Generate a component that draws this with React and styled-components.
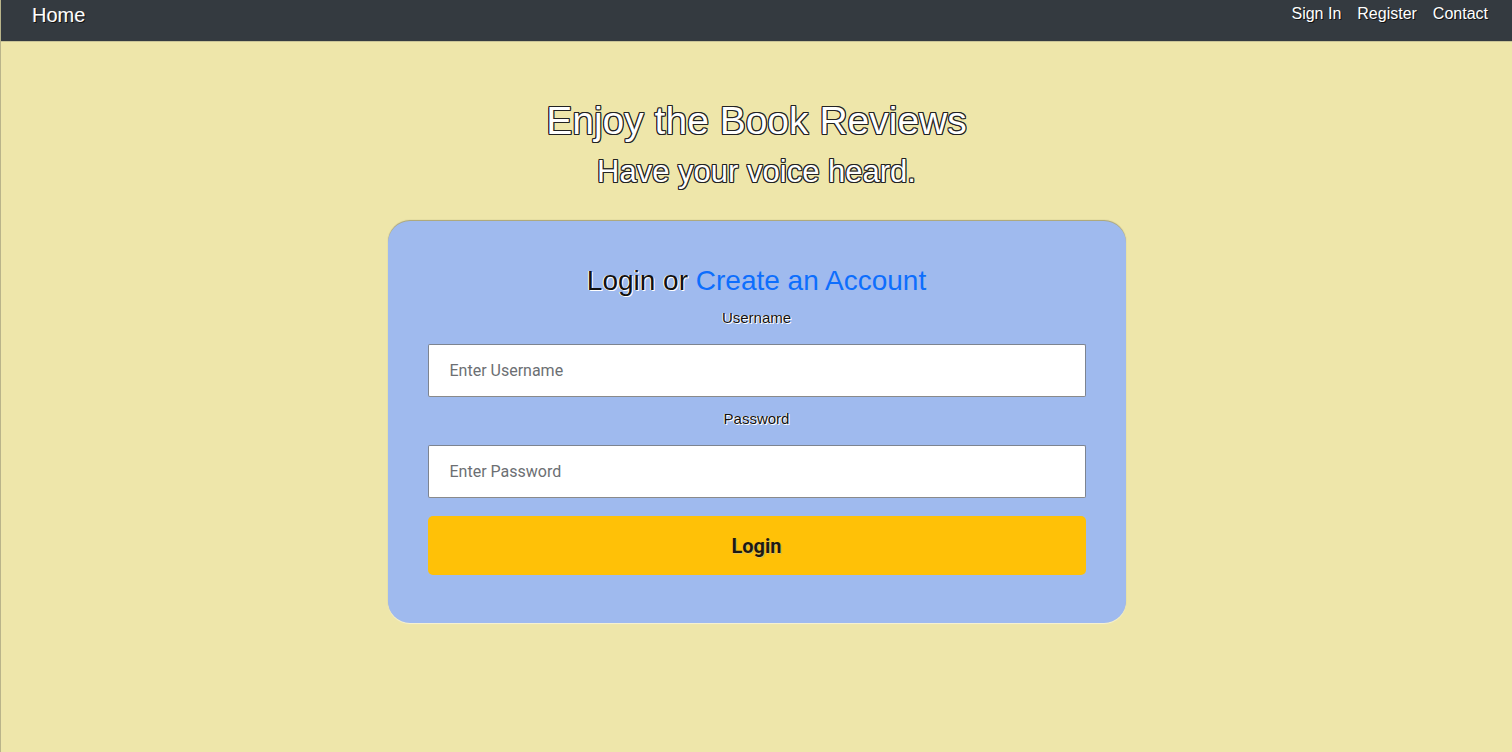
import React from "react";
import styled, { createGlobalStyle } from "styled-components";

const Global = createGlobalStyle`
  html, body { margin: 0; padding: 0; }
  body {
    background: #eee6aa;
    font-family: "Liberation Sans", Arial, sans-serif;
    min-height: 752px;
  }
  * { box-sizing: border-box; }
`;

const Page = styled.div`
  min-height: 752px;
  background: #eee6aa;
  border-left: 1px solid #b9b48a;
`;

const Nav = styled.nav`
  height: 42px;
  background: #343a40;
  display: flex;
  align-items: flex-start;
  justify-content: space-between;
  padding: 0 24px 0 31px;
  border-bottom: 1px solid #c9c498;
`;

const Brand = styled.a`
  color: #fff;
  font-size: 20px;
  line-height: 30px;
  text-decoration: none;
  text-shadow: 1px 1px 0 #111, -1px 0 0 #555;
`;

const Links = styled.div`
  display: flex;
  gap: 16px;
  padding-top: 4px;
`;

const NavLink = styled.a`
  color: #fff;
  font-size: 16px;
  line-height: 20px;
  text-decoration: none;
  text-shadow: 1px 1px 0 #111;
`;

const Hero = styled.header`
  display: flex;
  flex-direction: column;
  align-items: center;
  padding-top: 56px;
`;

const outlineDark = `
  text-shadow: 1px 0 0 #222, -1px 0 0 #222, 0 1px 0 #222, 0 -1px 0 #222,
    1px 1px 0 #222, -1px -1px 0 #222, 1px -1px 0 #222, -1px 1px 0 #222;
`;

const Title = styled.h1`
  margin: 0;
  color: #fff;
  font-weight: 400;
  font-size: 39px;
  line-height: 46px;
  ${outlineDark}
`;

const Subtitle = styled.h2`
  margin: 10px 0 0;
  color: #fff;
  font-weight: 400;
  font-size: 31px;
  line-height: 36px;
  ${outlineDark}
`;

const Card = styled.form`
  width: 738px;
  margin: 31px auto 0;
  background: #9fbaee;
  border-radius: 22px;
  box-shadow: 0 -1px 1px rgba(80, 80, 60, 0.45), 0 1px 1px rgba(255, 255, 255, 0.5);
  padding: 43px 40px 48px;
  display: flex;
  flex-direction: column;
  align-items: stretch;
`;

const CardTitle = styled.h3`
  margin: 0;
  text-align: center;
  font-weight: 400;
  font-size: 28px;
  line-height: 34px;
  color: #111;
  text-shadow: 1px 1px 0 #fff, -1px 0 0 #fff;
`;

const AccountLink = styled.a`
  color: #0d6efd;
  text-decoration: none;
  text-shadow: none;
`;

const Label = styled.label`
  display: block;
  text-align: center;
  font-size: 15px;
  line-height: 20px;
  color: #111;
  text-shadow: 1px 1px 0 #fff, -1px 0 0 #eee;
  margin: ${(p) => p.$top}px 0 16px;
`;

const Input = styled.input`
  width: 100%;
  height: 53px;
  border: 1px solid #7d8490;
  border-bottom-color: #8a8a8a;
  border-radius: 2px;
  background: #fff;
  padding: 0 21px;
  font-family: Roboto, "Liberation Sans", sans-serif;
  font-size: 16px;
  color: #212529;
  outline: none;
  &::placeholder {
    color: #6c6f73;
  }
`;

const Button = styled.button`
  margin-top: 18px;
  height: 59px;
  width: 100%;
  border: none;
  border-radius: 5px;
  background: #ffc107;
  color: #1e1a12;
  font-family: Roboto, "Liberation Sans", sans-serif;
  font-weight: 700;
  font-size: 20px;
  text-shadow: 1px 1px 0 #d8c060;
  cursor: pointer;
`;

export default function App() {
  return (
    <>
      <Global />
      <Page>
        <Nav>
          <Brand href="#">Home</Brand>
          <Links>
            <NavLink href="#">Sign In</NavLink>
            <NavLink href="#">Register</NavLink>
            <NavLink href="#">Contact</NavLink>
          </Links>
        </Nav>
        <Hero>
          <Title>Enjoy the Book Reviews</Title>
          <Subtitle>Have your voice heard.</Subtitle>
        </Hero>
        <Card onSubmit={(e) => e.preventDefault()}>
          <CardTitle>
            Login or <AccountLink href="#">Create an Account</AccountLink>
          </CardTitle>
          <Label $top={10} htmlFor="username">Username</Label>
          <Input id="username" placeholder="Enter Username" />
          <Label $top={12} htmlFor="password">Password</Label>
          <Input id="password" type="password" placeholder="Enter Password" />
          <Button type="submit">Login</Button>
        </Card>
      </Page>
    </>
  );
}
